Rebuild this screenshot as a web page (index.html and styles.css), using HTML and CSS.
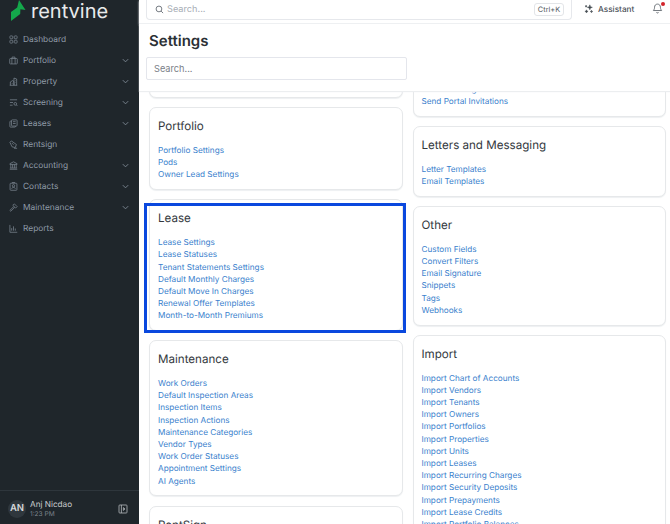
FILE: index.html
```html
<!DOCTYPE html>
<html lang="en">
<head>
    <meta charset="UTF-8">
    <meta name="viewport" content="width=device-width, initial-scale=1.0">
    <title>Settings</title>
    <link rel="stylesheet" href="styles.css">
</head>
<body>
    <div class="app">
        <aside class="sidebar">
            <div class="logo">
                <svg class="logo-mark" width="15" height="21" viewBox="0 0 15 21"><path d="M8 0L14.5 10L9.4 9.2L9.2 14L0 21V12L6.2 7.6Z" fill="#14a84b"/></svg>
                <span class="logo-text">rentvine</span>
            </div>
            <nav class="nav">
                <a class="nav-item"><svg viewBox="0 0 10 10"><rect x="1" y="1" width="3.2" height="3.2" rx=".8"/><rect x="5.8" y="1" width="3.2" height="3.2" rx=".8"/><rect x="1" y="5.8" width="3.2" height="3.2" rx=".8"/><rect x="5.8" y="5.8" width="3.2" height="3.2" rx=".8"/></svg><span>Dashboard</span></a>
                <a class="nav-item"><svg viewBox="0 0 10 10"><rect x=".8" y="2.8" width="8.4" height="6" rx=".8"/><path d="M3.4 2.8V1.2h3.2v1.6M3.2 2.8v6M6.8 2.8v6"/></svg><span>Portfolio</span><svg class="chev" viewBox="0 0 10 10"><path d="M2 3.5l3 3 3-3"/></svg></a>
                <a class="nav-item"><svg viewBox="0 0 10 10"><path d="M.8 9.2h8.4M1.5 9.2V5.5l2.5-1.5 1.5 1v4.2M5.5 9.2V1.2l3 1v7M3 7h1M7 4h.5M7 6h.5"/></svg><span>Property</span><svg class="chev" viewBox="0 0 10 10"><path d="M2 3.5l3 3 3-3"/></svg></a>
                <a class="nav-item"><svg viewBox="0 0 10 10"><path d="M1 2h8M1 5h3.5M1 8h3"/><circle cx="7" cy="6.5" r="1.5"/><path d="M8.2 7.7L9.3 8.8"/></svg><span>Screening</span><svg class="chev" viewBox="0 0 10 10"><path d="M2 3.5l3 3 3-3"/></svg></a>
                <a class="nav-item"><svg viewBox="0 0 10 10"><rect x="2.8" y="1" width="6.2" height="6.8" rx=".8"/><path d="M2.8 2.4H1.6a.6.6 0 0 0-.6.6v5.4a.6.6 0 0 0 .6.6h5a.6.6 0 0 0 .6-.6v-.6M4.4 3h3M4.4 5h3"/></svg><span>Leases</span><svg class="chev" viewBox="0 0 10 10"><path d="M2 3.5l3 3 3-3"/></svg></a>
                <a class="nav-item"><svg viewBox="0 0 10 10"><path d="M1 2.6L2.6 1l5.6 4-1.2 3.4L3.4 7.6zM3.2 3.4l1.8 1.8"/><path d="M5.6 9.2h3.4"/></svg><span>Rentsign</span></a>
                <a class="nav-item"><svg viewBox="0 0 10 10"><path d="M5 .9L9 3v.8H1V3zM2 4v3.6M4 4v3.6M6 4v3.6M8 4v3.6M1 7.8h8M.8 9.2h8.4"/></svg><span>Accounting</span><svg class="chev" viewBox="0 0 10 10"><path d="M2 3.5l3 3 3-3"/></svg></a>
                <a class="nav-item"><svg viewBox="0 0 10 10"><rect x="1.2" y="1.4" width="7.6" height="7.8" rx=".8"/><circle cx="5" cy="4.2" r="1.3"/><path d="M3 7.6c.3-1.2 1-1.6 2-1.6s1.7.4 2 1.6M3.2.6h3.6"/></svg><span>Contacts</span><svg class="chev" viewBox="0 0 10 10"><path d="M2 3.5l3 3 3-3"/></svg></a>
                <a class="nav-item"><svg viewBox="0 0 10 10"><path d="M1 8.2L5 4.2l1 1-4 4zM4.2 2.6L6 1l3 3-1.6 1.6z"/></svg><span>Maintenance</span><svg class="chev" viewBox="0 0 10 10"><path d="M2 3.5l3 3 3-3"/></svg></a>
                <a class="nav-item"><svg viewBox="0 0 10 10"><path d="M1 1v8.2h8.2M3 7.4V4.6M5 7.4V2.6M7 7.4V5"/></svg><span>Reports</span></a>
            </nav>
            <div class="user">
                <div class="avatar">AN</div>
                <div class="user-info">
                    <div class="user-name">Anj Nicdao</div>
                    <div class="user-time">1:23 PM</div>
                </div>
                <svg class="collapse" viewBox="0 0 10 10"><rect x="1" y="1" width="8" height="8" rx=".8"/><path d="M3.4 1v8M5.4 3.6v2.8l1.6-1.4z"/></svg>
            </div>
        </aside>

        <main class="main">
            <header class="topbar">
                <div class="top-search">
                    <svg viewBox="0 0 10 10"><circle cx="4.4" cy="4.4" r="3.2"/><path d="M6.8 6.8L9 9"/></svg>
                    <span class="top-placeholder">Search...</span>
                    <span class="kbd">Ctrl+K</span>
                </div>
                <a class="assistant">
                    <svg viewBox="0 0 12 12"><path d="M7 1l.7 2.2L10 4l-2.3.8L7 7l-.7-2.2L4 4l2.3-.8zM3 7l.5 1.4 1.4.5-1.4.5L3 10.800l-.5-1.400-1.400-.5 1.400-.5zM9 7.500l.4 1.100 1.100.4-1.100.4-.4 1.100-.4-1.100-1.100-.4 1.100-.4zM2.500 1.500l.3.9.9.3-.9.3-.3.9-.3-.9-.9-.3.9-.3z"/></svg>
                    <span>Assistant</span>
                </a>
                <div class="bell">
                    <svg viewBox="0 0 12 12"><path d="M6 1.2c-2 0-3.2 1.400-3.200 3.400 0 2.200-.9 3-1.300 3.600h9c-.4-.6-1.300-1.400-1.300-3.600 0-2-1.200-3.400-3.200-3.400zM4.800 10c.3.6.7.9 1.200.9s.9-.3 1.200-.9"/></svg>
                    <span class="bell-dot"></span>
                </div>
            </header>

            <section class="settings-head">
                <h1>Settings</h1>
                <input class="settings-search" type="text" placeholder="Search...">
            </section>

            <div class="columns">
                <div class="column">
                    <div class="card card-cut-left"></div>
                    <div class="card">
                        <h2>Portfolio</h2>
                        <a>Portfolio Settings</a>
                        <a>Pods</a>
                        <a>Owner Lead Settings</a>
                    </div>
                    <div class="card card-marked">
                        <h2>Lease</h2>
                        <a>Lease Settings</a>
                        <a>Lease Statuses</a>
                        <a>Tenant Statements Settings</a>
                        <a>Default Monthly Charges</a>
                        <a>Default Move In Charges</a>
                        <a>Renewal Offer Templates</a>
                        <a>Month-to-Month Premiums</a>
                    </div>
                    <div class="card">
                        <h2>Maintenance</h2>
                        <a>Work Orders</a>
                        <a>Default Inspection Areas</a>
                        <a>Inspection Items</a>
                        <a>Inspection Actions</a>
                        <a>Maintenance Categories</a>
                        <a>Vendor Types</a>
                        <a>Work Order Statuses</a>
                        <a>Appointment Settings</a>
                        <a>AI Agents</a>
                    </div>
                    <div class="card card-last">
                        <h2>RentSign</h2>
                    </div>
                </div>
                <div class="column">
                    <div class="card card-cut-right">
                        <a>Owner Settings</a>
                        <a>Send Portal Invitations</a>
                    </div>
                    <div class="card">
                        <h2>Letters and Messaging</h2>
                        <a>Letter Templates</a>
                        <a>Email Templates</a>
                    </div>
                    <div class="card">
                        <h2>Other</h2>
                        <a>Custom Fields</a>
                        <a>Convert Filters</a>
                        <a>Email Signature</a>
                        <a>Snippets</a>
                        <a>Tags</a>
                        <a>Webhooks</a>
                    </div>
                    <div class="card">
                        <h2>Import</h2>
                        <a>Import Chart of Accounts</a>
                        <a>Import Vendors</a>
                        <a>Import Tenants</a>
                        <a>Import Owners</a>
                        <a>Import Portfolios</a>
                        <a>Import Properties</a>
                        <a>Import Units</a>
                        <a>Import Leases</a>
                        <a>Import Recurring Charges</a>
                        <a>Import Security Deposits</a>
                        <a>Import Prepayments</a>
                        <a>Import Lease Credits</a>
                        <a>Import Portfolio Balances</a>
                    </div>
                </div>
            </div>
        </main>
    </div>
</body>
</html>
```

FILE: styles.css
```css
* {
    box-sizing: border-box;
}
html, body {
    height: 100%;
}
body {
    margin: 0;
    overflow: hidden;
    font-family: Inter, "Liberation Sans", sans-serif;
    text-rendering: geometricPrecision;
    background-color: #fff;
}
.app {
    display: flex;
    height: 524px;
}

/* sidebar */
.sidebar {
    width: 139px;
    flex-shrink: 0;
    display: flex;
    flex-direction: column;
    background-color: #1f262b;
}
.logo {
    height: 29px;
    display: flex;
    align-items: flex-start;
    padding-left: 11px;
    gap: 5px;
}
.logo-mark {
    flex-shrink: 0;
}
.logo-text {
    margin-top: -2px;
    font-size: 20px;
    line-height: 26px;
    color: #e8eaeb;
}
.nav {
    flex: 1;
    display: flex;
    flex-direction: column;
}
.nav-item {
    height: 21px;
    display: flex;
    align-items: center;
    padding: 0 9px;
    font-size: 8.4px;
    color: #8f9ba8;
}
.nav-item svg {
    width: 9px;
    height: 9px;
    flex-shrink: 0;
    margin-right: 5px;
    fill: none;
    stroke: #7f8a95;
    stroke-width: .8;
}
.nav-item span {
    flex: 1;
}
.nav-item .chev {
    margin-right: 0;
    stroke-width: 1;
}
.user {
    height: 34px;
    display: flex;
    align-items: center;
    padding: 2px 11px 0 8px;
    border-top: 1px solid #2e363c;
}
.avatar {
    width: 18px;
    height: 18px;
    flex-shrink: 0;
    border-radius: 50%;
    background-color: #2f373d;
    color: #d5d8da;
    font-size: 9.5px;
    font-weight: 600;
    line-height: 18px;
    text-align: center;
}
.user-info {
    flex: 1;
    margin: 1px 0 0 4px;
}
.user-name {
    font-size: 8.2px;
    line-height: 10px;
    color: #c9ccce;
}
.user-time {
    font-size: 6.6px;
    line-height: 10px;
    color: #7d858b;
}
.collapse {
    width: 10px;
    height: 10px;
    fill: none;
    stroke: #b5b9bc;
    stroke-width: .8;
}

/* top bar */
.main {
    flex: 1;
    min-width: 0;
    display: flex;
    flex-direction: column;
    height: 524px;
    background-color: #fff;
}
.topbar {
    height: 24px;
    flex-shrink: 0;
    display: flex;
    align-items: flex-start;
    padding: 0 7px 0 7px;
    border-bottom: 1px solid #eef0f2;
    box-shadow: 0 1px 2px #f1f2f4;
}
.top-search {
    width: 426px;
    height: 20px;
    flex-shrink: 0;
    display: flex;
    align-items: center;
    padding: 0 7px 0 8px;
    border: 1px solid #e6e8ec;
    border-top: none;
    border-radius: 0 0 4px 4px;
}
.top-search svg {
    width: 9px;
    height: 9px;
    fill: none;
    stroke: #555d66;
    stroke-width: .9;
}
.top-placeholder {
    flex: 1;
    margin-left: 3px;
    font-size: 9.2px;
    color: #a8aeb6;
}
.kbd {
    width: 30px;
    height: 13px;
    border: 1px solid #e3e5e8;
    border-radius: 3px;
    font-size: 7.4px;
    line-height: 11px;
    text-align: center;
    color: #555c63;
}
.assistant {
    display: flex;
    align-items: center;
    gap: 4px;
    height: 17px;
    margin-left: 12px;
    font-size: 8.2px;
    font-weight: 500;
    color: #4a5057;
}
.assistant svg {
    width: 10px;
    height: 10px;
    fill: #3d444b;
    stroke: #3d444b;
    stroke-width: .6;
}
.bell {
    position: relative;
    width: 11px;
    height: 11px;
    margin: 3px 0 0 auto;
}
.bell svg {
    display: block;
    width: 11px;
    height: 11px;
    fill: none;
    stroke: #555c63;
    stroke-width: .9;
}
.bell-dot {
    position: absolute;
    top: -1px;
    right: -2px;
    width: 4px;
    height: 4px;
    border-radius: 50%;
    background-color: #d3232a;
}

/* settings header */
.settings-head {
    height: 67px;
    flex-shrink: 0;
    position: relative;
    z-index: 1;
    padding: 6px 7px 0;
    background-color: #fff;
    box-shadow: 0 1px 1px #eceef0;
}
.settings-head h1 {
    margin: 0 0 5px 3px;
    font-size: 15px;
    line-height: 22px;
    font-weight: 600;
    color: #2b3035;
}
.settings-search {
    display: block;
    width: 261px;
    height: 23px;
    padding: 0 7px;
    border: 1px solid #e4e6ec;
    border-radius: 2px;
    font: 9.2px Inter, "Liberation Sans", sans-serif;
    color: #6f757c;
}
.settings-search::placeholder {
    color: #7a8087;
}

/* cards */
.columns {
    flex: 1;
    min-height: 0;
    overflow: hidden;
    display: flex;
    gap: 10px;
    padding: 0 4px 0 10px;
    background-color: #fff;
}
.column {
    flex: 1;
    min-width: 0;
    display: flex;
    flex-direction: column;
    gap: 9px;
}
.card {
    flex-shrink: 0;
    position: relative;
    padding: 11px 8px 8.5px;
    border: 1px solid #e6e8ea;
    border-radius: 7px;
    box-shadow: 0 1px 1px #eef0f2;
    background-color: #fff;
}
.card h2 {
    margin: 0 0 11px;
    font-size: 11.6px;
    line-height: 14px;
    font-weight: 400;
    color: #33383d;
}
.card a {
    display: block;
    font-size: 8.2px;
    line-height: 12.2px;
    color: #3a7fcd;
}
.card-cut-left {
    height: 30px;
    margin-top: -23px;
}
.card-cut-right {
    margin-top: -20px;
}
.card-last {
    margin-top: 1px;
    padding-bottom: 40px;
}
/* blue frame round the marked card */
.card-marked::after {
    content: "";
    position: absolute;
    top: 3px;
    left: -6px;
    right: -4px;
    bottom: -3px;
    border: 3px solid #0a48de;
}
```
